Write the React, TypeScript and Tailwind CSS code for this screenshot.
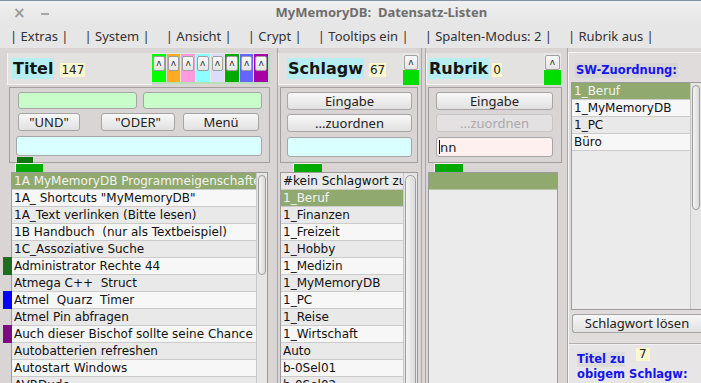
import React from "react";

const DV = "font-['DejaVu_Sans',sans-serif]";
const NS = "font-['Noto_Sans',sans-serif]";

function Btn({ children, className = "" }: { children: React.ReactNode; className?: string }) {
  return (
    <div
      className={
        "flex items-center justify-center rounded-[3px] border border-[#a5a5a5] bg-gradient-to-b from-[#f8f8f8] to-[#e1e1e1] text-[13px] leading-none text-[#222] font-['Noto_Sans',sans-serif] " +
        className
      }
    >
      {children}
    </div>
  );
}

function BtnDisabled({ children, className = "" }: { children: React.ReactNode; className?: string }) {
  return (
    <div
      className={
        "flex items-center justify-center rounded-[3px] border border-[#c6c6c6] bg-[#e3e1e1] text-[13px] leading-none text-[#a9a9a9] font-['Noto_Sans',sans-serif] " +
        className
      }
    >
      {children}
    </div>
  );
}

function Caret() {
  return (
    <div className="flex h-[15px] items-center justify-center rounded-[2px] border border-[#a0a0a0] bg-gradient-to-b from-[#fafafa] to-[#e4e4e4] text-[9px] leading-none text-[#333] font-['DejaVu_Sans',sans-serif]">
      ʌ
    </div>
  );
}

function ScrollBar({ thumbTop, thumbH, className = "" }: { thumbTop: number; thumbH: number; className?: string }) {
  return (
    <div className={"relative shrink-0 bg-[#e6e6e6] border-l border-[#c8c8c8] " + className}>
      <div
        className="absolute left-[1px] right-[1px] rounded-full border border-[#9d9d9d] bg-gradient-to-r from-[#f4f4f4] to-[#dadada]"
        style={{ top: thumbTop, height: thumbH }}
      />
    </div>
  );
}

type Row = { t: string; mark?: string };

function ListRows({ rows, sel }: { rows: Row[]; sel: number }) {
  return (
    <div className="flex flex-col">
      {rows.map((r, i) => (
        <div
          key={i}
          className={
            "relative h-[17px] shrink-0 border-b border-[#cbcbcb] pl-[2px] text-[12px] leading-[16px] whitespace-pre overflow-visible font-['DejaVu_Sans',sans-serif] " +
            (i === sel
              ? "bg-[#8fa96f] text-[#f4f4f4]"
              : i % 2 === 0
              ? "bg-[#e9e9e9] text-[#111]"
              : "bg-[#f7f7f7] text-[#111]")
          }
        >
          <div className="overflow-hidden">{r.t}</div>
          {r.mark && <div className="absolute left-[-9px] top-[-1px] h-[18px] w-[9px]" style={{ background: r.mark }} />}
        </div>
      ))}
    </div>
  );
}

const leftRows: Row[] = [
  { t: "1A MyMemoryDB Programmeigenschaften" },
  { t: '1A_ Shortcuts "MyMemoryDB"' },
  { t: "1A_Text verlinken (Bitte lesen)" },
  { t: "1B Handbuch  (nur als Textbeispiel)" },
  { t: "1C_Assoziative Suche" },
  { t: "Administrator Rechte 44", mark: "#1d6e22" },
  { t: "Atmega C++  Struct" },
  { t: "Atmel  Quarz  Timer", mark: "#0000ff" },
  { t: "Atmel Pin abfragen" },
  { t: "Auch dieser Bischof sollte seine Chance", mark: "#7b0d7e" },
  { t: "Autobatterien refreshen" },
  { t: "Autostart Windows" },
  { t: "AVRDude" },
];

const midRows: Row[] = [
  { t: "#kein Schlagwort zugeordnet" },
  { t: "1_Beruf" },
  { t: "1_Finanzen" },
  { t: "1_Freizeit" },
  { t: "1_Hobby" },
  { t: "1_Medizin" },
  { t: "1_MyMemoryDB" },
  { t: "1_PC" },
  { t: "1_Reise" },
  { t: "1_Wirtschaft" },
  { t: "Auto" },
  { t: "b-0Sel01" },
  { t: "b-0Sel02" },
];

const swRows: Row[] = [{ t: "1_Beruf" }, { t: "1_MyMemoryDB" }, { t: "1_PC" }, { t: "Büro" }];

const colors = ["#00ff00", "#ffaa22", "#ff9ade", "#8cffff", "#dcdcff", "#00aa00", "#6464ff", "#a600a6"];

const menu = ["| Extras |", "| System |", "| Ansicht |", "| Crypt |", "| Tooltips ein |", "| Spalten-Modus: 2 |", "| Rubrik aus |"];

export default function App() {
  return (
    <div className="flex h-[383px] w-[701px] flex-col overflow-hidden bg-[#d9d5d4]">
      {/* title bar */}
      <div className="flex h-[25px] shrink-0 items-center border-t border-[#8593a5] bg-gradient-to-b from-[#f0f0f0] to-[#e5e5e5]">
        <span className="ml-[13px] text-[15px] font-bold leading-none text-[#9a9a9a] font-['DejaVu_Sans',sans-serif]">×</span>
        <span className="ml-[15px] mt-[2px] h-[2px] w-[8px] bg-[#a8a8a8]" />
        <span className={"ml-[227px] text-[13px] font-bold whitespace-pre text-[#6e6e6e] " + NS}>MyMemoryDB:  Datensatz-Listen</span>
      </div>
      {/* menu bar */}
      <div className={"flex h-[23px] shrink-0 items-center gap-[16px] bg-[#e6e6e6] pl-[10px] text-[13px] text-[#333] whitespace-pre " + NS}>
        {menu.map((m) => (
          <span key={m}>{m}</span>
        ))}
      </div>

      {/* main */}
      <div className="flex min-h-0 flex-1">
        {/* column 1 */}
        <div className="flex w-[270px] shrink-0 flex-col pt-[5px]">
          <div className="ml-[7px] flex h-[32px] shrink-0">
            <div className="flex w-[145px] items-center gap-[6px] border-b border-l border-[#f4f2f2] bg-[#e4e2e1] pl-[4px]">
              <span className={"bg-[#b7eef2] px-[1px] text-[16px] font-bold leading-[21px] text-[#151515] " + DV}>Titel</span>
              <span className={"mt-[2px] bg-[#fbf7cf] px-[1px] text-[12px] leading-[14px] text-[#222] " + DV}>147</span>
            </div>
            <div className="grid h-[31px] w-[118px] grid-cols-8 gap-x-[1px] border-b-2 border-r-2 border-[#b8dfb8] bg-[#e9e7e7] pt-[1px]">
              {colors.map((c) => (
                <div key={c} className="flex flex-col" style={{ background: c }}>
                  <div className="px-[1px] pt-[2px]">
                    <Caret />
                  </div>
                </div>
              ))}
            </div>
          </div>
          {/* sunken box */}
          <div className="relative ml-[9px] mt-[2px] flex h-[76px] w-[261px] shrink-0 flex-col border border-[#a29e9c] pl-[8px] pt-[4px]">
            <div className="flex gap-[6px]">
              <div className="h-[17px] w-[119px] rounded-[3px] border border-[#a6a6a6] bg-[#c8fcc8]" />
              <div className="h-[17px] w-[119px] rounded-[3px] border border-[#a6a6a6] bg-[#c8fcc8]" />
            </div>
            <div className="mt-[4px] flex h-[18px]">
              <Btn className="w-[62px]">"UND"</Btn>
              <Btn className="ml-[21px] w-[74px]">"ODER"</Btn>
              <Btn className="ml-[8px] w-[76px]">Menü</Btn>
            </div>
            <div className="ml-[-2px] mt-[5px] h-[20px] w-[246px] rounded-[3px] border border-[#a6a6a6] bg-[#d9ffff]" />
            <div className="absolute bottom-[-1px] left-[7px] h-[6px] w-[16px] bg-[#0d760d]" />
          </div>
          <div className="h-[9px] shrink-0">
            <div className="ml-[15px] h-[9px] w-[28px] border-l border-t border-[#f0f0f0] bg-[#00aa00]" />
          </div>
          {/* list */}
          <div className="ml-[11px] flex min-h-0 w-[257px] flex-1 border border-b-0 border-[#9b9b9b]">
            <div className="min-w-0 flex-1">
              <ListRows rows={leftRows} sel={0} />
            </div>
            <ScrollBar thumbTop={2} thumbH={100} className="w-[11px]" />
          </div>
        </div>

        {/* splitter */}
        <div className="w-[8px] shrink-0 border-r border-[#aaa6a4]" />

        {/* column 2 */}
        <div className="flex w-[143px] shrink-0 flex-col pt-[5px]">
          <div className="flex h-[32px] shrink-0">
            <div className="flex w-[125px] items-center gap-[5px] border-b border-l border-[#f4f2f2] bg-[#e4e2e1] pl-[8px]">
              <span className={"bg-[#b7eef2] px-[1px] text-[16px] font-bold leading-[21px] text-[#151515] " + DV}>Schlagw</span>
              <span className={"mt-[2px] bg-[#fbf7cf] px-[1px] text-[12px] leading-[14px] text-[#222] " + DV}>67</span>
            </div>
            <div className="flex w-[16px] flex-col bg-[#e9e7e7]">
              <div className="px-[1px] pt-[2px]">
                <Caret />
              </div>
              <div className="flex-1 bg-[#00dd00]" />
            </div>
          </div>
          <div className="ml-[2px] mt-[2px] flex h-[76px] w-[138px] shrink-0 flex-col border border-[#a29e9c] pl-[6px] pt-[4px]">
            <Btn className="h-[18px] w-[125px]">Eingabe</Btn>
            <Btn className="mt-[4px] h-[18px] w-[125px]">...zuordnen</Btn>
            <div className="mt-[5px] h-[20px] w-[125px] rounded-[3px] border border-[#a6a6a6] bg-[#d9ffff]" />
          </div>
          <div className="h-[9px] shrink-0">
            <div className="ml-[15px] h-[9px] w-[29px] border-l border-t border-[#f0f0f0] bg-[#00aa00]" />
          </div>
          <div className="ml-[2px] flex min-h-0 w-[138px] flex-1 border border-b-0 border-[#9b9b9b]">
            <div className="min-w-0 flex-1">
              <ListRows rows={midRows} sel={1} />
            </div>
            <ScrollBar thumbTop={2} thumbH={240} className="w-[14px] pr-[3px]" />
          </div>
        </div>

        {/* splitter */}
        <div className="w-[5px] shrink-0 border-l border-r border-[#aaa6a4]" />

        {/* column 3 */}
        <div className="flex w-[138px] shrink-0 flex-col pt-[5px]">
          <div className="flex h-[32px] shrink-0">
            <div className="flex w-[118px] items-center gap-[3px] border-b border-l border-[#f4f2f2] bg-[#e4e2e1] pl-[1px]">
              <span className={"bg-[#b7eef2] px-[1px] text-[16px] font-bold leading-[21px] text-[#151515] " + DV}>Rubrik</span>
              <span className={"mt-[2px] bg-[#fbf7cf] px-[1px] text-[12px] leading-[14px] text-[#222] " + DV}>0</span>
            </div>
            <div className="flex w-[17px] flex-col bg-[#e9e7e7]">
              <div className="px-[1px] pt-[2px]">
                <Caret />
              </div>
              <div className="flex-1 bg-[#00dd00]" />
            </div>
          </div>
          <div className="ml-[2px] mt-[2px] flex h-[76px] w-[134px] shrink-0 flex-col border border-[#a29e9c] pl-[7px] pt-[4px]">
            <Btn className="h-[18px] w-[117px]">Eingabe</Btn>
            <BtnDisabled className="mt-[4px] h-[18px] w-[117px]">...zuordnen</BtnDisabled>
            <div className="mt-[5px] flex h-[20px] w-[117px] items-center rounded-[3px] border border-[#a6a6a6] bg-[#fff0f0] pl-[2px]">
              <span className="h-[14px] w-[1px] bg-[#111]" />
              <span className={"text-[13px] leading-none text-[#222] " + DV}>nn</span>
            </div>
          </div>
          <div className="h-[9px] shrink-0">
            <div className="ml-[8px] h-[9px] w-[29px] border-l border-t border-[#f0f0f0] bg-[#00aa00]" />
          </div>
          <div className="ml-[2px] min-h-0 w-[130px] flex-1 border border-b-0 border-[#9b9b9b] bg-[#ebebeb]">
            <div className="h-[17px] border-b border-[#b9c7a8] bg-[#8fa96f]" />
          </div>
        </div>

        {/* splitter */}
        <div className="w-[4px] shrink-0 border-r border-[#aaa6a4]" />

        {/* column 4 */}
        <div className="mt-[4px] flex min-w-0 flex-1 flex-col border-l border-t border-[#f6f4f4] bg-[#dfdcdb]">
          <div className="flex h-[29px] shrink-0 items-end pb-[4px] pl-[6px]">
            <span className={"bg-[#d7d6d6] px-[1px] text-[11.5px] font-bold leading-[15px] text-[#1414ee] " + DV}>SW-Zuordnung:</span>
          </div>
          <div className="ml-[2px] flex h-[228px] shrink-0 border border-r-0 border-[#9b9b9b] bg-[#ebebeb]">
            <div className="min-w-0 flex-1">
              <ListRows rows={swRows} sel={0} />
            </div>
            <ScrollBar thumbTop={2} thumbH={125} className="w-[11px]" />
          </div>
          <Btn className="ml-[3px] mt-[4px] h-[19px] shrink-0 border-r-0 rounded-r-none">Schlagwort lösen</Btn>
          <div className="mt-[5px] h-[6px] shrink-0 border-b border-[#b3afad]" />
          <div className="flex flex-1 flex-col border-t border-[#f4f2f2] bg-[#e7e5e5] pl-[8px] pt-[3px]">
            <div className="flex items-start">
              <span className={"mt-[4px] bg-[#dcdcdc] text-[11.5px] font-bold leading-[15px] text-[#1414ee] " + DV}>Titel zu</span>
              <span className={"ml-[11px] bg-[#fbf7cf] px-[3px] text-[12px] leading-[13px] text-[#222] " + DV}>7</span>
            </div>
            <span className={"mt-[0px] text-[11.5px] font-bold leading-[15px] text-[#1414ee] " + DV}>obigem Schlagw:</span>
          </div>
        </div>
      </div>
    </div>
  );
}
